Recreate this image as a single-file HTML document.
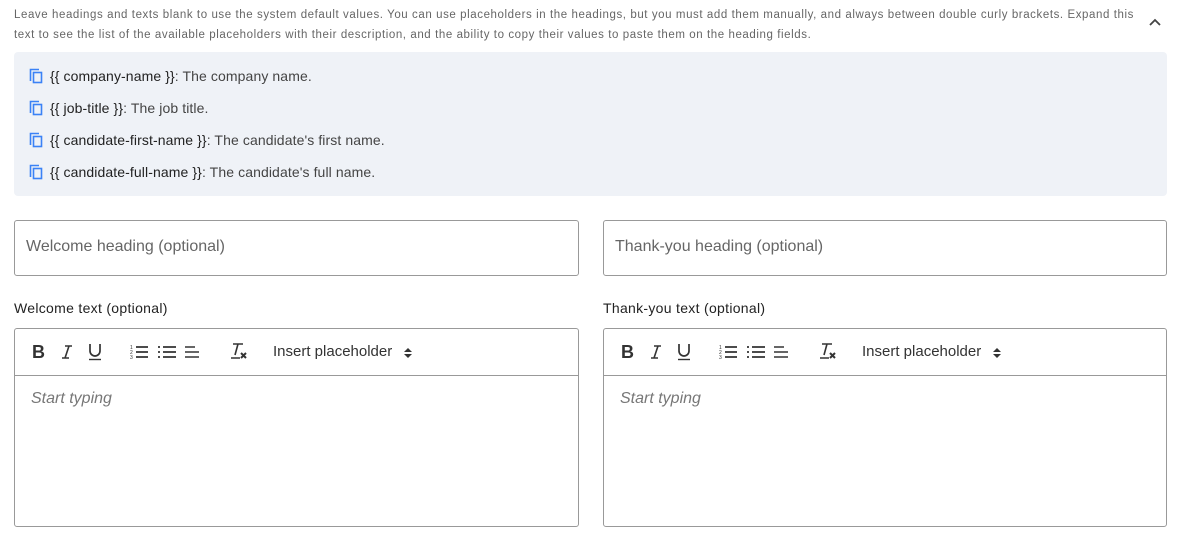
<!DOCTYPE html>
<html><head><style>
*{box-sizing:border-box;margin:0;padding:0}
body{width:1179px;height:537px;background:#fff;font-family:"Liberation Sans",sans-serif;color:#333;position:relative;overflow:hidden}
.intro{position:absolute;left:14px;top:5px;width:1128px;font-size:11.5px;line-height:20px;color:#666;letter-spacing:0.58px}
.chev{position:absolute;left:1148px;top:17px}
.box{position:absolute;left:14px;top:52px;width:1153px;height:144px;background:#eff2f7;border-radius:4px}
.row{position:absolute;left:15px;font-size:14px;color:#444;display:flex;align-items:center;letter-spacing:0.1px}
.row svg{margin-right:7px}
.row b{font-weight:normal;color:#222}
.inp{position:absolute;top:220px;width:565px;height:56px;border:1px solid #999;border-radius:3px;font-size:16px;color:#666;padding:17px 11px}
.lbl{position:absolute;top:300px;font-size:14px;color:#222;letter-spacing:0.3px}
.ed{position:absolute;top:328px;width:565px;height:199px;border:1px solid #999;border-radius:3px}
.tb{height:47px;border-bottom:1px solid #999;position:relative}
.tb span,.tb svg{position:absolute}
.tb span{top:13px;font-size:17px;color:#333}
.ph{position:absolute;left:16px;top:61px;font-style:italic;font-size:16px;color:#777}
</style></head><body>
<div class="intro">Leave headings and texts blank to use the system default values. You can use placeholders in the headings, but you must add them manually, and always between double curly brackets. Expand this text to see the list of the available placeholders with their description, and the ability to copy their values to paste them on the heading fields.</div>
<svg class="chev" width="14" height="10" viewBox="0 0 14 10"><path d="M2 8l5-5 5 5" fill="none" stroke="#444" stroke-width="1.8"/></svg>
<div class="box">
<div class="row" style="top:16px"><svg width="14" height="16" viewBox="0 0 14 16"><path d="M1.5 13V1.5H10" fill="none" stroke="#3b82f6" stroke-width="1.6"/><rect x="4.5" y="4.5" width="8" height="10" fill="none" stroke="#3b82f6" stroke-width="1.6"/></svg><b>{{ company-name }}</b>: The company name.</div>
<div class="row" style="top:48px"><svg width="14" height="16" viewBox="0 0 14 16"><path d="M1.5 13V1.5H10" fill="none" stroke="#3b82f6" stroke-width="1.6"/><rect x="4.5" y="4.5" width="8" height="10" fill="none" stroke="#3b82f6" stroke-width="1.6"/></svg><b>{{ job-title }}</b>: The job title.</div>
<div class="row" style="top:80px"><svg width="14" height="16" viewBox="0 0 14 16"><path d="M1.5 13V1.5H10" fill="none" stroke="#3b82f6" stroke-width="1.6"/><rect x="4.5" y="4.5" width="8" height="10" fill="none" stroke="#3b82f6" stroke-width="1.6"/></svg><b>{{ candidate-first-name }}</b>: The candidate's first name.</div>
<div class="row" style="top:112px"><svg width="14" height="16" viewBox="0 0 14 16"><path d="M1.5 13V1.5H10" fill="none" stroke="#3b82f6" stroke-width="1.6"/><rect x="4.5" y="4.5" width="8" height="10" fill="none" stroke="#3b82f6" stroke-width="1.6"/></svg><b>{{ candidate-full-name }}</b>: The candidate's full name.</div>
</div>
<div class="inp" style="left:14px">Welcome heading (optional)</div>
<div class="inp" style="left:603px;width:564px">Thank-you heading (optional)</div>
<div class="lbl" style="left:14px">Welcome text (optional)</div>
<div class="lbl" style="left:603px">Thank-you text (optional)</div>

<div class="ed" style="left:14px"><div class="tb">
<span style="left:17px;font-size:18px;font-weight:bold">B</span>
<svg style="left:45px;top:15px" width="14" height="16" viewBox="0 0 14 16"><path d="M5 2h7M2 14h7M9 2L5 14" fill="none" stroke="#333" stroke-width="1.6"/></svg>
<svg style="left:72px;top:14px" width="16" height="18" viewBox="0 0 16 18"><path d="M3 1v7a5 5 0 0 0 10 0V1" fill="none" stroke="#333" stroke-width="1.7"/><path d="M2 16.5h12" stroke="#333" stroke-width="1.4"/></svg>
<svg style="left:115px;top:15px" width="18" height="16" viewBox="0 0 18 16"><path d="M6 3h12M6 8h12M6 13h12" stroke="#333" stroke-width="1.7"/><text x="0" y="5" font-size="5" fill="#333">1</text><text x="0" y="10" font-size="5" fill="#333">2</text><text x="0" y="15" font-size="5" fill="#333">3</text></svg>
<svg style="left:143px;top:15px" width="18" height="16" viewBox="0 0 18 16"><path d="M5 3h13M5 8h13M5 13h13" stroke="#333" stroke-width="1.7"/><path d="M0 3h2M0 8h2M0 13h2" stroke="#333" stroke-width="1.8"/></svg>
<svg style="left:170px;top:15px" width="16" height="16" viewBox="0 0 16 16"><path d="M0 3h10M0 8h14M0 13h14" stroke="#333" stroke-width="1.6"/></svg>
<svg style="left:214px;top:13px" width="20" height="20" viewBox="0 0 20 20"><path d="M4 2h10M9 2L6 13M2 16h9" fill="none" stroke="#333" stroke-width="1.6"/><path d="M12 11l5 5M17 11l-5 5" stroke="#333" stroke-width="2"/></svg>
<span style="left:258px;font-size:15px;top:14px">Insert placeholder</span>
<svg style="left:389px;top:18px" width="8" height="12" viewBox="0 0 8 12"><path d="M0 5L4 1L8 5ZM0 7L4 11L8 7Z" fill="#333"/></svg>
</div><div class="ph">Start typing</div></div>

<div class="ed" style="left:603px;width:564px"><div class="tb">
<span style="left:17px;font-size:18px;font-weight:bold">B</span>
<svg style="left:45px;top:15px" width="14" height="16" viewBox="0 0 14 16"><path d="M5 2h7M2 14h7M9 2L5 14" fill="none" stroke="#333" stroke-width="1.6"/></svg>
<svg style="left:72px;top:14px" width="16" height="18" viewBox="0 0 16 18"><path d="M3 1v7a5 5 0 0 0 10 0V1" fill="none" stroke="#333" stroke-width="1.7"/><path d="M2 16.5h12" stroke="#333" stroke-width="1.4"/></svg>
<svg style="left:115px;top:15px" width="18" height="16" viewBox="0 0 18 16"><path d="M6 3h12M6 8h12M6 13h12" stroke="#333" stroke-width="1.7"/><text x="0" y="5" font-size="5" fill="#333">1</text><text x="0" y="10" font-size="5" fill="#333">2</text><text x="0" y="15" font-size="5" fill="#333">3</text></svg>
<svg style="left:143px;top:15px" width="18" height="16" viewBox="0 0 18 16"><path d="M5 3h13M5 8h13M5 13h13" stroke="#333" stroke-width="1.7"/><path d="M0 3h2M0 8h2M0 13h2" stroke="#333" stroke-width="1.8"/></svg>
<svg style="left:170px;top:15px" width="16" height="16" viewBox="0 0 16 16"><path d="M0 3h10M0 8h14M0 13h14" stroke="#333" stroke-width="1.6"/></svg>
<svg style="left:214px;top:13px" width="20" height="20" viewBox="0 0 20 20"><path d="M4 2h10M9 2L6 13M2 16h9" fill="none" stroke="#333" stroke-width="1.6"/><path d="M12 11l5 5M17 11l-5 5" stroke="#333" stroke-width="2"/></svg>
<span style="left:258px;font-size:15px;top:14px">Insert placeholder</span>
<svg style="left:389px;top:18px" width="8" height="12" viewBox="0 0 8 12"><path d="M0 5L4 1L8 5ZM0 7L4 11L8 7Z" fill="#333"/></svg>
</div><div class="ph">Start typing</div></div>
</body></html>
